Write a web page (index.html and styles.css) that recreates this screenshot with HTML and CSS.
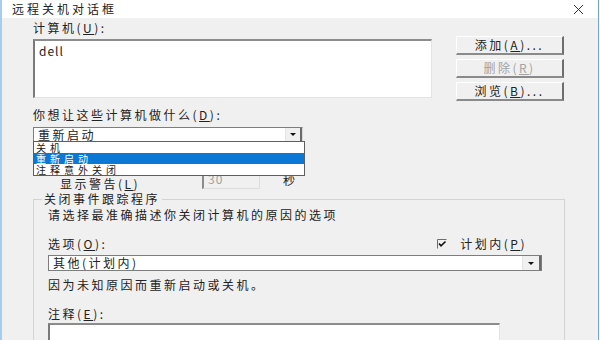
FILE: index.html
```html
<!DOCTYPE html>
<html lang="zh-CN">
<head>
  <meta charset="UTF-8">
  <title>远程关机对话框</title>
  <link rel="stylesheet" href="styles.css">
</head>
<body>
  <div class="dialog">
    <div class="titlebar">
      <span class="title">远程关机对话框</span>
      <svg class="close" width="11" height="11" viewBox="0 0 11 11">
        <path d="M1 1 L10 10 M10 1 L1 10" stroke="#333" stroke-width="1" fill="none"/>
      </svg>
    </div>

    <div class="content">
      <div class="computers">
        <div class="computers-main">
          <div class="lbl">计算机(<u>U</u>):</div>
          <div class="listbox"><span class="latin">dell</span></div>
        </div>
        <div class="buttons">
          <button class="btn">添加(<u>A</u>)...</button>
          <button class="btn" disabled>删除(<u>R</u>)</button>
          <button class="btn">浏览(<u>B</u>)...</button>
        </div>
      </div>

      <div class="lbl action-lbl">你想让这些计算机做什么(<u>D</u>):</div>
      <div class="combo-wrap">
        <div class="combo action-combo">
          <span class="combo-text">重新启动</span>
          <span class="arrow"><i></i></span>
        </div>
        <ul class="droplist">
          <li>关机</li>
          <li class="selected">重新启动</li>
          <li>注释意外关闭</li>
        </ul>
      </div>

      <div class="warn-row">
        <span class="warn-lbl">显示警告(<u>L</u>)</span>
        <span class="num">30</span>
        <span class="sec">秒</span>
      </div>

      <fieldset class="group">
        <legend>关闭事件跟踪程序</legend>
        <div class="lbl hint">请选择最准确描述你关闭计算机的原因的选项</div>
        <div class="option-row">
          <span class="lbl">选项(<u>O</u>):</span>
          <span class="check">
            <svg width="10" height="10" viewBox="0 0 10 10">
              <path d="M0.5 9.5 V0.5 H9.5" stroke="#6d6d6d" fill="none"/>
              <path d="M2 4.5 L4 6.8 L8.5 2.5" stroke="#111" stroke-width="1.6" fill="none"/>
            </svg>
            <span>计划内(<u>P</u>)</span>
          </span>
        </div>
        <div class="combo reason-combo">
          <span class="combo-text">其他(计划内)</span>
          <span class="arrow"><i></i></span>
        </div>
        <div class="lbl desc">因为未知原因而重新启动或关机。</div>
        <div class="lbl note-lbl">注释(<u>E</u>):</div>
        <div class="note"></div>
      </fieldset>
    </div>
  </div>
</body>
</html>
```

FILE: styles.css
```css
body {
  margin: 0;
  background: #fff;
  font-family: "Noto Sans CJK SC", "Noto Sans", sans-serif;
  font-size: 12px;
  color: #222;
}
u {
  text-decoration: underline;
}
.dialog {
  width: 596px;
  height: 340px;
  background: #f0f0f0;
  border-left: 2px solid #a9cbec;
  border-right: 1px solid #6aa6de;
  overflow: hidden;
}
.titlebar {
  height: 18px;
  background: #fff;
  display: flex;
  align-items: center;
  justify-content: space-between;
  padding: 0 14px 0 10px;
}
.title {
  letter-spacing: 3px;
  line-height: 12px;
  font-size: 12px;
}
.close {
  display: block;
}
.content {
  padding: 4px 0 0 31px;
}
.lbl, .btn, .combo-text, .droplist li, .warn-row, legend, .check span {
  letter-spacing: 2.5px;
  line-height: 12px;
  white-space: nowrap;
}
.computers {
  display: flex;
  align-items: flex-start;
}
.listbox {
  margin-top: 5px;
  width: 399px;
  height: 59px;
  box-sizing: border-box;
  background: #fff;
  border-style: solid;
  border-width: 2px 1px 1px 2px;
  border-color: #8c8c8c #e3e3e3 #e3e3e3 #7a7a7a;
  padding: 1px 4px;
}
.latin {
  letter-spacing: 1px;
  line-height: 12px;
}
.buttons {
  margin: 14px 0 0 24px;
  display: flex;
  flex-direction: column;
  gap: 4px;
}
.btn {
  width: 108px;
  height: 19px;
  font-family: inherit;
  font-size: 12px;
  color: #222;
  background: #f0f0f0;
  border-style: solid;
  border-width: 1px 2px 2px 1px;
  border-color: #fff #6e6e6e #8a8a8a #fff;
  padding: 0;
}
.btn:disabled {
  color: #a3a3a3;
}
.action-lbl {
  margin-top: 8px;
}
.combo-wrap {
  position: relative;
  margin-top: 6px;
  width: 270px;
}
.combo {
  display: flex;
  align-items: center;
  height: 15px;
  box-sizing: border-box;
  background: #fff;
  border: 1px solid #7d7d7d;
  border-right-color: #d8d8d8;
  padding-left: 4px;
}
.combo-text {
  flex: 1;
}
.arrow {
  width: 17px;
  height: 13px;
  box-sizing: border-box;
  border-left: 1px solid #e4e4e4;
  border-right: 2px solid #6a6a6a;
  background: #f0f0f0;
  display: flex;
  align-items: center;
  justify-content: center;
}
.arrow i {
  width: 0;
  height: 0;
  border-left: 3px solid transparent;
  border-right: 3px solid transparent;
  border-top: 3px solid #111;
}
.droplist {
  position: absolute;
  left: 0;
  top: 14px;
  width: 272px;
  box-sizing: border-box;
  margin: 0;
  padding: 0;
  list-style: none;
  background: #fff;
  border: 1px solid #5e5e5e;
  z-index: 2;
}
.droplist li {
  height: 11px;
  line-height: 11px;
  font-size: 10px;
  letter-spacing: 4px;
  padding-left: 2px;
}
.droplist li.selected {
  background: #0a78d4;
  color: #fff;
}
.warn-row {
  margin-top: 29px;
  height: 18px;
  display: flex;
  align-items: center;
  padding-left: 27px;
}
.warn-lbl {
  width: 142px;
  padding-top: 7px;
}
.num {
  width: 58px;
  height: 18px;
  box-sizing: border-box;
  border: 1px solid #dcdcdc;
  border-left: 2px solid #8c8c8c;
  color: #a0a0a0;
  padding-left: 4px;
  line-height: 14px;
  letter-spacing: 1px;
}
.sec {
  margin-left: 23px;
}
.group {
  margin: 4px 0 0 0;
  width: 532px;
  box-sizing: border-box;
  border: 1px solid #d3d3d3;
  padding: 0 0 20px 14px;
}
legend {
  margin-left: -6px;
  padding: 0 2px;
}
.hint {
  margin-top: 4px;
}
.option-row {
  margin-top: 17px;
  width: 494px;
  display: flex;
  align-items: center;
}
.check {
  margin-left: auto;
  margin-right: 15px;
  display: flex;
  align-items: center;
  gap: 13px;
}
.check svg {
  display: block;
}
.reason-combo {
  margin-top: 5px;
  width: 494px;
  height: 16px;
  border-color: #7d7d7d;
}
.reason-combo .arrow {
  width: 19px;
  height: 14px;
}
.desc {
  margin-top: 8px;
}
.note-lbl {
  margin-top: 17px;
}
.note {
  margin-top: 3px;
  width: 452px;
  height: 40px;
  box-sizing: border-box;
  background: #fff;
  border-style: solid;
  border-width: 2px 1px 1px 2px;
  border-color: #8c8c8c #e3e3e3 #e3e3e3 #7a7a7a;
}
```
